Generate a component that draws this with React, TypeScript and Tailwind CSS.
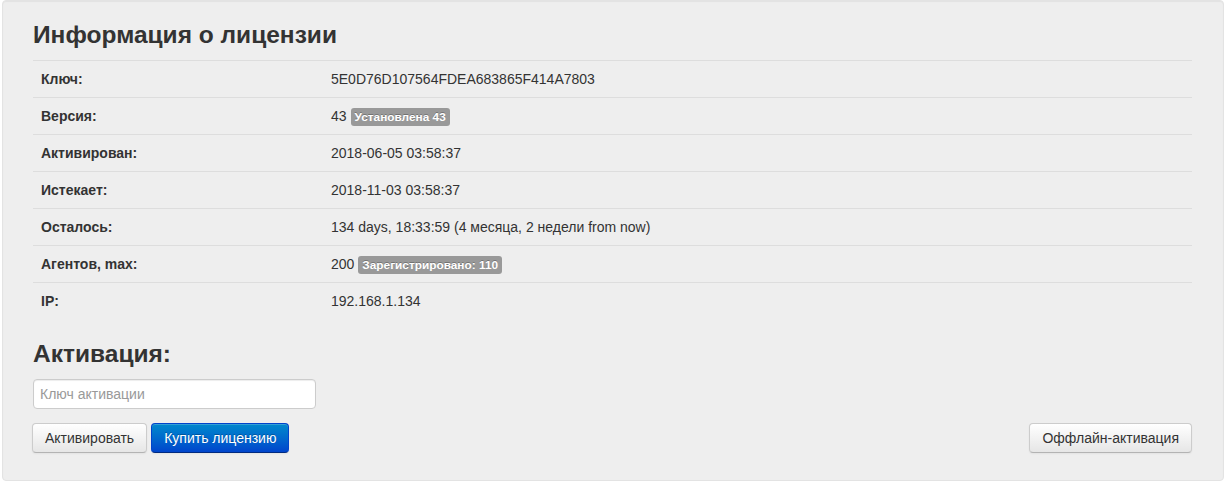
import React from "react";

const rows: { label: string; value: string; badge?: string }[] = [
  { label: "Ключ:", value: "5E0D76D107564FDEA683865F414A7803" },
  { label: "Версия:", value: "43", badge: "Установлена 43" },
  { label: "Активирован:", value: "2018-06-05 03:58:37" },
  { label: "Истекает:", value: "2018-11-03 03:58:37" },
  { label: "Осталось:", value: "134 days, 18:33:59 (4 месяца, 2 недели from now)" },
  { label: "Агентов, max:", value: "200", badge: "Зарегистрировано: 110" },
  { label: "IP:", value: "192.168.1.134" },
];

function Badge({ children }: { children: React.ReactNode }) {
  return (
    <span className="ml-1 inline-block rounded-[3px] bg-[#999999] px-1 py-[2px] align-baseline text-[11.844px] font-bold leading-[14px] whitespace-nowrap text-white [text-shadow:0_-1px_0_rgba(0,0,0,0.25)]">
      {children}
    </span>
  );
}

export default function App() {
  return (
    <div className="bg-white px-[2px] font-['Liberation_Sans',Arial,sans-serif] text-[14px] leading-[20px] text-[#333333]">
      <div className="h-[481px] rounded-[4px] border border-[#e3e3e3] bg-[#eeeeee] pt-[19px] pr-[31px] pl-[30px] shadow-[inset_0_1px_1px_rgba(0,0,0,0.05)]">
        {/* License info */}
        <h3 className="mb-[10px] text-[24.5px] leading-[30px] font-bold">Информация о лицензии</h3>
        <table className="mb-[20px] w-full border-collapse">
          <tbody>
            {rows.map((r) => (
              <tr key={r.label} className="border-t border-[#dddddd]">
                <td className="w-[290px] p-2 align-top font-bold">{r.label}</td>
                <td className="p-2 align-top">
                  {r.value}
                  {r.badge && <Badge>{r.badge}</Badge>}
                </td>
              </tr>
            ))}
          </tbody>
        </table>

        {/* Activation */}
        <h3 className="mb-[10px] text-[24.5px] leading-[30px] font-bold">Активация:</h3>
        <input
          type="text"
          placeholder="Ключ активации"
          className="block h-[30px] w-[283px] rounded-[4px] border border-[#cccccc] bg-white px-[6px] text-[14px] text-[#555555] shadow-[inset_0_1px_1px_rgba(0,0,0,0.075)] outline-none placeholder:text-[#999999]"
        />
        <div className="mt-[14px] -ml-px flex items-center">
          <button className="h-[30px] rounded-[4px] border border-[#cccccc] border-b-[#b3b3b3] bg-gradient-to-b from-white to-[#e6e6e6] px-3 text-[14px] text-[#333333] shadow-[inset_0_1px_0_rgba(255,255,255,0.2),0_1px_2px_rgba(0,0,0,0.05)]">
            Активировать
          </button>
          <button className="ml-[4px] h-[30px] rounded-[4px] border border-[#0044cc] border-b-[#002a80] bg-gradient-to-b from-[#0088cc] to-[#0044cc] px-3 text-[14px] text-white [text-shadow:0_-1px_0_rgba(0,0,0,0.25)] shadow-[inset_0_1px_0_rgba(255,255,255,0.2),0_1px_2px_rgba(0,0,0,0.05)]">
            Купить лицензию
          </button>
          <button className="ml-auto h-[30px] rounded-[4px] border border-[#cccccc] border-b-[#b3b3b3] bg-gradient-to-b from-white to-[#e6e6e6] px-3 text-[14px] text-[#333333] shadow-[inset_0_1px_0_rgba(255,255,255,0.2),0_1px_2px_rgba(0,0,0,0.05)]">
            Оффлайн-активация
          </button>
        </div>
      </div>
    </div>
  );
}
